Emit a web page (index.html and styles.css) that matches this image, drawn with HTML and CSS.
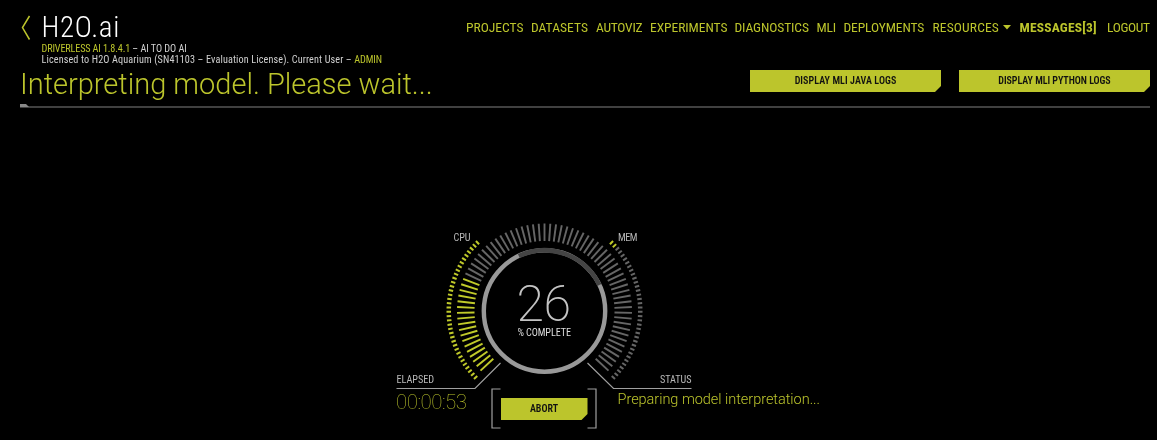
FILE: index.html
```
<!DOCTYPE html>
<html lang="en">
<head>
<meta charset="utf-8">
<title>H2O.ai Driverless AI</title>
<link rel="stylesheet" href="styles.css">
</head>
<body>
<header class="topbar">
  <svg class="back" width="10" height="26" viewBox="0 0 10 26"><path d="M8.5 1 L1.5 12.6 L8.5 24.5"/></svg>
  <div class="brand">
    <div class="logo">H2O.ai</div>
    <div class="meta version"><span class="accent">DRIVERLESS AI 1.8.4.1</span> – AI TO DO AI</div>
    <div class="meta license">Licensed to H2O Aquarium (SN41103 – Evaluation License). Current User – <span class="accent">ADMIN</span></div>
  </div>
  <nav class="nav">
    <a class="projects">PROJECTS</a>
    <a class="datasets">DATASETS</a>
    <a class="autoviz">AUTOVIZ</a>
    <a class="experiments">EXPERIMENTS</a>
    <a class="diagnostics">DIAGNOSTICS</a>
    <a class="mli">MLI</a>
    <a class="deployments">DEPLOYMENTS</a>
    <a class="resources">RESOURCES<svg class="caret" width="8" height="5" viewBox="0 0 8 5"><path d="M0 0H8L4 4.6Z"/></svg></a>
    <a class="messages">MESSAGES[3]</a>
    <a class="logout">LOGOUT</a>
  </nav>
</header>
<section class="titlebar">
  <h1>Interpreting model. Please wait...</h1>
  <button class="btn java">DISPLAY MLI JAVA LOGS</button>
  <button class="btn python">DISPLAY MLI PYTHON LOGS</button>
</section>
<div class="rule"><span class="tab"></span></div>
<main class="console">
  <svg class="gauge" width="440" height="216" viewBox="390 220 440 216">
    <g id="inner-ticks"></g>
    <g id="outer-ticks"></g>
    <circle class="ring" cx="544.5" cy="311" r="60.7"/>
    <path class="ring-rest" d="M518.85 255.99 A60.7 60.7 0 0 1 599.3 284.9"/>
    <path class="lead" d="M396.5 388.5H475L500.5 363"/>
    <path class="lead" d="M691.5 388.5H613.5L587.5 363"/>
    <path class="bracket" d="M500.5 389H492V428H500.5M587.5 389H596V428H587.5"/>
    <text class="tag" x="453.5" y="240.8" textLength="17">CPU</text>
    <text class="tag" x="618" y="240.8" textLength="19.5">MEM</text>
    <text class="percent" x="516.5" y="320.5" textLength="54.5">26</text>
    <text class="complete" x="517.5" y="336" textLength="53.5">% COMPLETE</text>
    <text class="tag" x="396.5" y="382.5" textLength="37.5">ELAPSED</text>
    <text class="tag" x="660" y="382.5" textLength="31.5">STATUS</text>
    <text class="clock" x="396" y="408.7" textLength="71">00:00:53</text>
    <text class="status" x="617.5" y="403.8" textLength="202.5">Preparing model interpretation...</text>
  </svg>
  <button class="btn abort">ABORT</button>
</main>
<script src="gauge.js"></script>
</body>
</html>
```
FILE: styles.css
```
* { box-sizing: border-box; }
body {
  margin: 0;
  height: 440px;
  overflow: hidden;
  background: #000;
  color: #d0d0d0;
  font-family: Roboto, "Liberation Sans", sans-serif;
  font-stretch: 75%;
}
.topbar, .titlebar, .console { will-change: transform; }
.topbar {
  display: flex;
  height: 69px;
  padding: 12px 7px 0 21px;
}
.back { margin: 3px 11px 0 0; flex: none; }
.back path { fill: none; stroke: #bcc52c; stroke-width: 1.5; }
.brand { flex: none; width: 360px; margin-left: -0.5px; white-space: nowrap; }
.logo {
  height: 32px;
  color: #fff;
  font-size: 29px;
  font-weight: 300;
  line-height: 30px;
  letter-spacing: 0.7px;
}
.meta { font-size: 10.2px; line-height: 10.6px; }
.version { letter-spacing: -0.05px; }
.license { letter-spacing: 0.12px; }
.version .accent { letter-spacing: -0.15px; }
.accent { color: #bcc52c; }
.license .accent { letter-spacing: -0.1px; }
.nav {
  flex: 1;
  display: flex;
  justify-content: flex-end;
  padding-top: 7px;
  color: #bcc52c;
  font-size: 13.5px;
  line-height: 16px;
  white-space: nowrap;
}
.nav a { flex: none; }
.projects { width: 65px; letter-spacing: 0; }
.datasets { width: 65px; letter-spacing: 0.05px; }
.autoviz { width: 54px; letter-spacing: -0.25px; }
.experiments { width: 84.5px; letter-spacing: -0.05px; }
.diagnostics { width: 82px; letter-spacing: -0.1px; }
.mli { width: 27px; letter-spacing: -0.2px; }
.deployments { width: 89px; letter-spacing: -0.1px; }
.resources { width: 87px; letter-spacing: 0.15px; }
.messages { width: 87.5px; font-weight: 700; letter-spacing: 0.2px; }
.logout { width: 43px; letter-spacing: -0.35px; }
.caret { margin: 0 0 2px 4px; fill: #bcc52c; }
.titlebar {
  display: flex;
  height: 35px;
  padding: 1px 7px 0 20px;
}
h1 {
  flex: 1;
  margin: 0;
  color: #bcc52c;
  font-size: 29px;
  font-weight: 300;
  font-stretch: 100%;
  line-height: 29px;
  letter-spacing: 0;
}
.btn {
  width: 191px;
  height: 22px;
  padding: 0;
  border: 0;
  background: #bcc52c;
  clip-path: polygon(0 0, 100% 0, 100% calc(100% - 6px), calc(100% - 6px) 100%, 0 100%);
  color: #111;
  font: 600 10px/22px Roboto, "Liberation Sans", sans-serif;
  font-stretch: 75%;
  letter-spacing: 0.08px;
}
.python { margin-left: 18px; letter-spacing: -0.04px; }
.rule {
  height: 4px;
  margin: 0 7px 0 20px;
  background: linear-gradient(#404040, #404040) 0 2px / 100% 2px no-repeat;
}
.tab {
  display: block;
  width: 9px;
  height: 3px;
  background: #888;
  clip-path: polygon(0 0, 6px 0, 100% 100%, 0 100%);
}
.console {
  position: relative;
  width: 440px;
  margin: 112px 0 0 390px;
}
.gauge { display: block; }
.inner { stroke-width: 1.9; }
.outer { stroke-width: 2; }
.idle { stroke: #666; }
.active { stroke: #c0ca2a; }
.ring { fill: none; stroke: #999; stroke-width: 4.4; }
.ring-rest { fill: none; stroke: #444; stroke-width: 4.6; }
.lead, .bracket { fill: none; stroke: #a0a0a0; stroke-width: 1.2; }
.tag { fill: #b8b8b8; font-size: 10.2px; }
.percent { fill: #c4c4c4; font-size: 50px; font-weight: 200; font-stretch: 100%; }
.complete { fill: #ddd; font-size: 10.2px; }
.clock { fill: #bcc52c; font-size: 20.5px; font-weight: 250; }
.status { fill: #bcc52c; font-size: 14.5px; font-weight: 300; font-stretch: 100%; }
.abort {
  position: absolute;
  left: 110.5px;
  top: 178px;
  width: 87px;
  letter-spacing: 0;
}
```
FILE: gauge.js
```
const CX = 544.5, CY = 311;

function ticks(id, cls, count, start, step, r1, r2, isActive) {
  const group = document.getElementById(id);
  for (let i = 0; i < count; i++) {
    const a = (start + i * step) * Math.PI / 180;
    const line = document.createElementNS("http://www.w3.org/2000/svg", "line");
    line.setAttribute("x1", CX + r1 * Math.sin(a));
    line.setAttribute("y1", CY - r1 * Math.cos(a));
    line.setAttribute("x2", CX + r2 * Math.sin(a));
    line.setAttribute("y2", CY - r2 * Math.cos(a));
    line.setAttribute("class", cls + (isActive(i) ? " active" : " idle"));
    group.appendChild(line);
  }
}

ticks("inner-ticks", "inner", 71, -133, 3.8, 70, 87.5, i => i < 18);
ticks("outer-ticks", "outer", 36, -134, 2.56, 93.5, 98, () => true);
ticks("outer-ticks", "outer", 36, 44.4, 2.56, 93.5, 98, i => i < 2);
```
